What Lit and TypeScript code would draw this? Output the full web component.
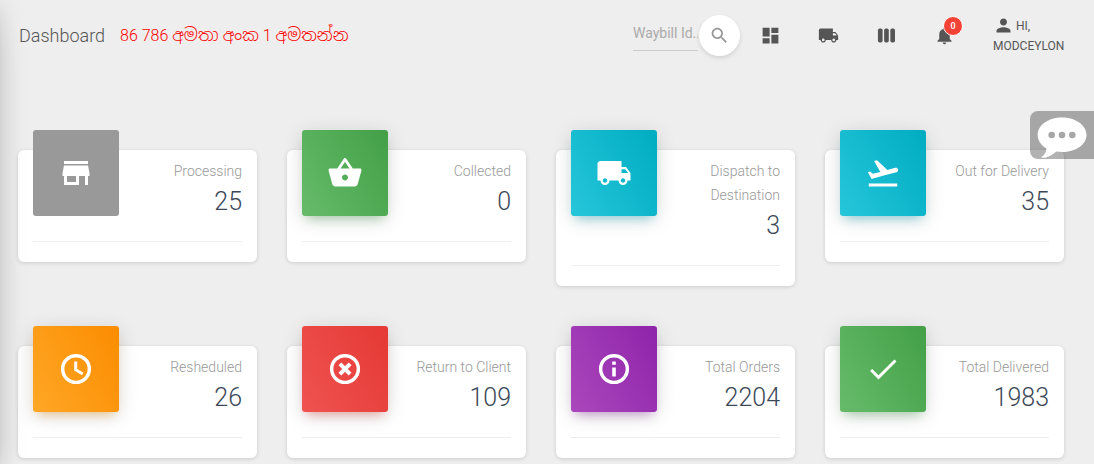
import { LitElement, html, css, svg } from "lit";
import { customElement, property } from "lit/decorators.js";

const icons: Record<string, unknown> = {
  store: svg`<path d="M20 4H4v2h16V4zm1 10v-2l-1-5H4l-1 5v2h1v6h10v-6h4v6h2v-6h1zm-9 4H6v-4h6v4z"/>`,
  basket: svg`<path d="M17.21 9l-4.38-6.56c-.19-.28-.51-.42-.83-.42-.32 0-.64.14-.83.43L6.79 9H2c-.55 0-1 .45-1 1 0 .09.01.18.04.27l2.54 9.27c.23.84 1 1.46 1.92 1.46h13c.92 0 1.69-.62 1.93-1.46l2.54-9.27L23 10c0-.55-.45-1-1-1h-4.79zM9 9l3-4.4L15 9H9zm3 8c-1.1 0-2-.9-2-2s.9-2 2-2 2 .9 2 2-.9 2-2 2z"/>`,
  truck: svg`<path d="M20 8h-3V4H3c-1.100 0-2 .9-2 2v11h2c0 1.660 1.340 3 3 3s3-1.340 3-3h6c0 1.660 1.340 3 3 3s3-1.340 3-3h2v-5l-3-4zM6 18.500c-.83 0-1.500-.67-1.500-1.500s.67-1.500 1.500-1.500 1.500.67 1.500 1.500-.67 1.500-1.500 1.500zm13.500-9l1.960 2.500H17V9.500h2.500zm-1.500 9c-.83 0-1.500-.67-1.500-1.500s.67-1.500 1.500-1.500 1.500.67 1.500 1.500-.67 1.500-1.500 1.500z"/>`,
  takeoff: svg`<path d="M2.500 19h19v2h-19zm19.570-9.360c-.21-.8-1.040-1.280-1.840-1.060L14.920 10l-6.900-6.430-1.930.51 4.140 7.170-4.970 1.330-1.970-1.540-1.450.39 1.820 3.160.77 1.330 1.600-.43 5.310-1.420 4.350-1.160L21 11.490c.81-.23 1.280-1.050 1.070-1.850z"/>`,
  clock: svg`<g fill="none" stroke="currentColor"><circle cx="12" cy="12" r="8.900" stroke-width="2.300"/><path stroke-width="2" d="M11.800 7v5.500l4.700 2.800"/></g>`,
  cross: svg`<g fill="none" stroke="currentColor"><circle cx="12" cy="12" r="8.900" stroke-width="2.300"/><path stroke-width="2.700" d="M8.600 8.600l6.800 6.800M15.400 8.600l-6.800 6.800"/></g>`,
  info: svg`<circle cx="12" cy="12" r="8.900" fill="none" stroke="currentColor" stroke-width="2.300"/><path d="M10.800 11h2.400v6h-2.400zM10.800 7h2.400v2.200h-2.400z"/>`,
  done: svg`<path d="M9 16.200L4.800 12l-1.400 1.400L9 19 21 7l-1.400-1.400L9 16.200z"/>`,
  search: svg`<path d="M15.500 14h-.79l-.28-.27C15.410 12.590 16 11.110 16 9.500 16 5.910 13.090 3 9.500 3S3 5.910 3 9.500 5.910 16 9.500 16c1.610 0 3.090-.59 4.230-1.570l.27.28v.79l5 4.990L20.490 19l-4.990-5zm-6 0C7.010 14 5 11.990 5 9.500S7.010 5 9.500 5 14 7.010 14 9.500 11.990 14 9.500 14z"/>`,
  dashboard: svg`<path d="M3 13h8V3H3v10zm0 8h8v-6H3v6zm10 0h8V11h-8v10zm0-18v6h8V3h-8z"/>`,
  columns: svg`<rect x="2.200" y="4" width="5.300" height="16" rx="2"/><rect x="9.300" y="4" width="5.300" height="16" rx="2"/><rect x="16.400" y="4" width="5.300" height="16" rx="2"/>`,
  bell: svg`<path d="M12 22c1.100 0 2-.9 2-2h-4c0 1.100.89 2 2 2zm6-6v-5c0-3.070-1.640-5.640-4.500-6.320V4c0-.83-.67-1.500-1.500-1.500s-1.500.67-1.500 1.500v.68C7.630 5.360 6 7.920 6 11v5l-2 2v1h16v-1l-2-2z"/>`,
  person: svg`<path d="M12 12c2.210 0 4-1.790 4-4s-1.790-4-4-4-4 1.790-4 4 1.790 4 4 4zm0 2c-2.670 0-8 1.340-8 4v2h16v-2c0-2.660-5.330-4-8-4z"/>`,
};

@customElement("md-icon")
class MdIcon extends LitElement {
  @property() name = "";
  static styles = css`
    :host { display: inline-block; width: 21px; height: 21px; }
    .glyph { display: block; width: 100%; height: 100%; fill: currentColor; }
  `;
  render() {
    return html`<svg class="glyph" viewBox="0 0 24 24" aria-hidden="true">${icons[this.name]}</svg>`;
  }
}

@customElement("stat-card")
class StatCard extends LitElement {
  @property() icon = "";
  @property() tone = "";
  @property() label = "";
  @property() value = "";
  static styles = css`
    :host { display: block; }
    .card { background: #fff; border-radius: 6px; box-shadow: 0 1px 4px rgba(0, 0, 0, 0.14); }
    .head { display: flex; justify-content: space-between; padding: 0 15px 20px; }
    .tile {
      flex: none; display: grid; place-items: center; width: 86px; height: 86px;
      margin: -20px 0 -20px; border-radius: 3px; color: #fff; background: #999;
    }
    .tile md-icon { width: 36px; height: 36px; }
    .green { background: linear-gradient(60deg, #66bb6a, #43a047); box-shadow: 0 4px 20px rgba(0, 0, 0, 0.14), 0 7px 10px -5px rgba(76, 175, 80, 0.4); }
    .cyan { background: linear-gradient(60deg, #26c6da, #00acc1); box-shadow: 0 4px 20px rgba(0, 0, 0, 0.14), 0 7px 10px -5px rgba(0, 188, 212, 0.4); }
    .orange { background: linear-gradient(60deg, #ffa726, #fb8c00); box-shadow: 0 4px 20px rgba(0, 0, 0, 0.14), 0 7px 10px -5px rgba(255, 152, 0, 0.4); }
    .red { background: linear-gradient(60deg, #ef5350, #e53935); box-shadow: 0 4px 20px rgba(0, 0, 0, 0.14), 0 7px 10px -5px rgba(244, 67, 54, 0.4); }
    .purple { background: linear-gradient(60deg, #ab47bc, #8e24aa); box-shadow: 0 4px 20px rgba(0, 0, 0, 0.14), 0 7px 10px -5px rgba(156, 39, 176, 0.4); }
    .text { padding-top: 9px; text-align: right; max-width: 108px; }
    .label { margin: 0; font-size: 14px; line-height: 24px; color: #999; }
    .value { margin: 0; font-size: 25px; line-height: 38px; font-weight: 300; color: #3c4858; }
    .foot { height: 20px; margin: 0 15px; border-top: 1px solid #eee; }
  `;
  render() {
    return html`<article class="card">
      <div class="head">
        <div class="tile ${this.tone}"><md-icon name=${this.icon}></md-icon></div>
        <div class="text">
          <p class="label">${this.label}</p>
          <h3 class="value">${this.value}</h3>
        </div>
      </div>
      <div class="foot"></div>
    </article>`;
  }
}

const stats = [
  ["store", "gray", "Processing", "25"],
  ["basket", "green", "Collected", "0"],
  ["truck", "cyan", "Dispatch to Destination", "3"],
  ["takeoff", "cyan", "Out for Delivery", "35"],
  ["clock", "orange", "Resheduled", "26"],
  ["cross", "red", "Return to Client", "109"],
  ["info", "purple", "Total Orders", "2204"],
  ["done", "green", "Total Delivered", "1983"],
];

@customElement("app-root")
class AppRoot extends LitElement {
  static styles = css`
    :host {
      display: block; min-height: 100vh; background: #eee; color: #555;
      font-family: Roboto, "Noto Sans Sinhala", "Noto Sans", sans-serif; font-weight: 300;
    }
    .drawer {
      position: fixed; top: 0; bottom: 0; left: -260px; width: 260px; z-index: 2; pointer-events: none;
      box-shadow: 0 16px 38px -12px rgba(0, 0, 0, 0.2), 0 4px 25px rgba(0, 0, 0, 0.12), 0 8px 10px -5px rgba(0, 0, 0, 0.1);
    }
    .bar { display: flex; align-items: center; padding: 15px 30px 16px 19px; }
    .title { margin: 0; font-size: 18px; line-height: 20px; font-weight: 300; }
    .hotline { margin: 0 auto 0 15px; font-size: 16px; line-height: 20px; color: #f00; white-space: nowrap; }
    .sinhala { font-size: 17px; }
    .search { display: flex; align-items: center; }
    .query {
      box-sizing: border-box; width: 65px; height: 30px; padding: 0 0 5px; border: 0;
      border-bottom: 1px solid #ccc; border-radius: 0; background: none; outline: 0;
      font: 400 14px Roboto, sans-serif; color: #555;
    }
    .query::placeholder { color: #aaa; opacity: 1; }
    .go {
      display: grid; place-items: center; width: 41px; height: 41px; margin: 0 1px; padding: 0;
      border: 0; border-radius: 50%; background: #fff; color: #999; box-shadow: 0 2px 4px rgba(0, 0, 0, 0.12);
    }
    .nav { display: flex; }
    .link { display: grid; place-items: center; position: relative; width: 58px; height: 40px; color: #555; }
    .badge {
      position: absolute; top: 0; left: 28px; width: 18px; height: 18px; border-radius: 50%;
      background: #f44336; border: 1px solid #fff; box-sizing: content-box;
      font-size: 9px; line-height: 18px; font-weight: 500; color: #fff; text-align: center;
    }
    .user { margin-left: 20px; width: 71px; font-size: 12px; line-height: 20px; font-weight: 400; color: #555; text-decoration: none; }
    .hello { display: flex; align-items: center; gap: 2px; height: 20px; }
    .grid { display: grid; grid-template-columns: repeat(4, 1fr); align-items: start; gap: 60px 30px; padding: 78px 30px 0 18px; }
    .chat {
      position: fixed; top: 111px; right: 0; z-index: 3; width: 64px; height: 48px; padding: 0;
      border: 0; border-radius: 8px 0 0 8px; background: rgba(0, 0, 0, 0.3);
    }
    .bubble { display: block; width: 64px; height: 48px; }
  `;
  render() {
    return html`
      <aside class="drawer"></aside>
      <header class="bar">
        <h1 class="title">Dashboard</h1>
        <p class="hotline">86 786 <span class="sinhala" lang="si">අමතා අංක</span> 1 <span class="sinhala" lang="si">අමතන්න</span></p>
        <form class="search" @submit=${(e: Event) => e.preventDefault()}>
          <input class="query" type="text" placeholder="Waybill Id..." aria-label="Waybill Id" />
          <button class="go" aria-label="Search"><md-icon name="search"></md-icon></button>
        </form>
        <nav class="nav">
          <a class="link" href="#dashboard" aria-label="Dashboard"><md-icon name="dashboard"></md-icon></a>
          <a class="link" href="#shipping" aria-label="Shipping"><md-icon name="truck"></md-icon></a>
          <a class="link" href="#columns" aria-label="Columns"><md-icon name="columns"></md-icon></a>
          <a class="link" href="#alerts" aria-label="Notifications"><md-icon name="bell"></md-icon><span class="badge">0</span></a>
        </nav>
        <a class="user" href="#profile"><span class="hello"><md-icon name="person"></md-icon>HI,</span>MODCEYLON</a>
      </header>
      <main class="grid">
        ${stats.map(([icon, tone, label, value]) => html`<stat-card icon=${icon} tone=${tone} label=${label} value=${value}></stat-card>`)}
      </main>
      <button class="chat" aria-label="Chat">
        <svg class="bubble" viewBox="0 0 64 48" aria-hidden="true">
          <path fill="#fff" fill-rule="evenodd" d="M32 6.500C18.500 6.500 7.700 14 7.700 24c0 5.700 3.500 10.400 8.800 13.500-.3 4-2 6.500-5.200 8.500 1 1.500 5 .9 8.500-.9 2.500-1.300 4.500-3 6.500-4.600 1.800.3 3.700.5 5.700.5 13.500 0 24.500-7.300 24.500-17S45.500 6.500 32 6.500zM21.700 20.700a3.300 3.300 0 1 1 0 6.600 3.300 3.300 0 0 1 0-6.600zm10.300 0a3.300 3.300 0 1 1 0 6.600 3.300 3.300 0 0 1 0-6.600zm10.300 0a3.300 3.300 0 1 1 0 6.600 3.300 3.300 0 0 1 0-6.600z"/>
        </svg>
      </button>
    `;
  }
}
